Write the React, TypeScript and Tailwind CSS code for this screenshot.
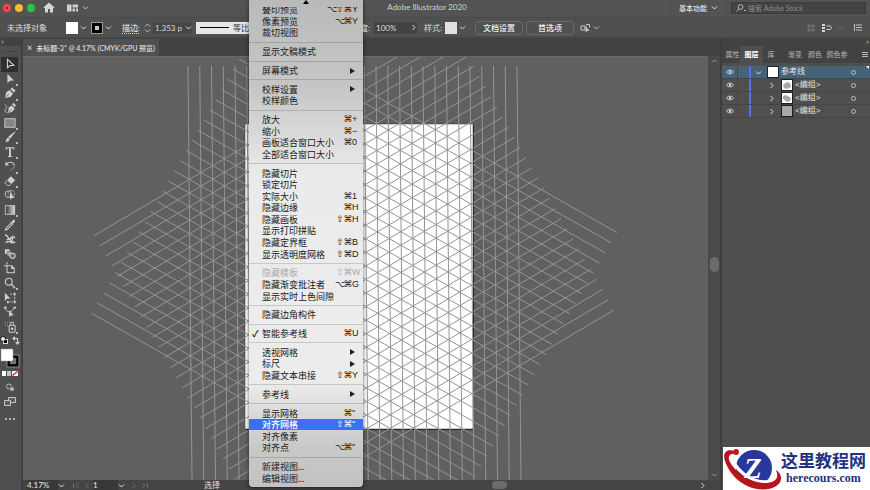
import { useState } from 'react'
import type { ReactNode } from 'react'

const menuItems: any[] = [
  { label: '叠印预览', mods: '⌥⇧⌘', k: 'Y' },
  { label: '像素预览', mods: '⌥⌘', k: 'Y' },
  { label: '裁切视图' },
  null,
  { label: '显示文稿模式' },
  null,
  { label: '屏幕模式', sub: true },
  null,
  { label: '校样设置', sub: true },
  { label: '校样颜色' },
  null,
  { label: '放大', mods: '⌘', k: '+' },
  { label: '缩小', mods: '⌘', k: '−' },
  { label: '画板适合窗口大小', mods: '⌘', k: '0' },
  { label: '全部适合窗口大小' },
  null,
  { label: '隐藏切片' },
  { label: '锁定切片' },
  { label: '实际大小', mods: '⌘', k: '1' },
  { label: '隐藏边缘', mods: '⌘', k: 'H' },
  { label: '隐藏画板', mods: '⇧⌘', k: 'H' },
  { label: '显示打印拼贴' },
  { label: '隐藏定界框', mods: '⇧⌘', k: 'B' },
  { label: '显示透明度网格', mods: '⇧⌘', k: 'D' },
  null,
  { label: '隐藏模板', mods: '⇧⌘', k: 'W', disabled: true },
  { label: '隐藏渐变批注者', mods: '⌥⌘', k: 'G' },
  { label: '显示实时上色间隙' },
  null,
  { label: '隐藏边角构件' },
  null,
  { label: '智能参考线', mods: '⌘', k: 'U', checked: true },
  null,
  { label: '透视网格', sub: true },
  { label: '标尺', sub: true },
  { label: '隐藏文本串接', mods: '⇧⌘', k: 'Y' },
  null,
  { label: '参考线', sub: true },
  null,
  { label: '显示网格', mods: '⌘', k: '"' },
  { label: '对齐网格', mods: '⇧⌘', k: '"' },
  { label: '对齐像素' },
  { label: '对齐点', mods: '⌥⌘', k: '"' },
  null,
  { label: '新建视图...' },
  { label: '编辑视图...' },
]

const line = { fill: 'none', stroke: 'currentColor', strokeWidth: 1 }

const tools: { name: string; more?: boolean; icon: ReactNode }[] = [
  { name: '选择工具', icon: <path d="M4 1.5v10l3-2.6 4.5-.4z" {...line} strokeWidth={1.3} /> },
  { name: '直接选择工具', more: true, icon: <path d="M4 1v11l3-3 4.5-.2z" fill="currentColor" /> },
  { name: '钢笔工具', more: true, icon: <><path d="M1 13l1.600-7L6.500 3.500l4 4L8 11.500z" fill="currentColor" /><path d="M7.500 2.500L9.500.5l4 4-2 2z" fill="currentColor" /><path d="M1.500 12.500l4-4" stroke="#4f4f4f" strokeWidth=".8" /></> },
  { name: '曲率工具', icon: <><path d="M4.500 13l1-6.500L9 4l3.500 3.500-2.500 3.500z" fill="currentColor" /><path d="M9.500 3l1.700-2L14 4.100l-1.700 1.700z" fill="currentColor" /><path d="M5 12.500l3.500-4" stroke="#4f4f4f" strokeWidth=".8" /><path d="M1 3c2.500 1.500 2.500 3 1 5s-1 4 2 4.500" {...line} /></> },
  { name: '矩形工具', more: true, icon: <rect x="1" y="2" width="12" height="10" fill="#858585" stroke="currentColor" /> },
  { name: '画笔工具', more: true, icon: <><path d="M13 1L7 8.500 5.300 7z" fill="currentColor" stroke="currentColor" /><path d="M1 12.500c2-.5 1-2.500 2.300-3.800 1-.9 2.600-.4 3 .6.500 2-2 4-5.300 3.200z" fill="currentColor" /></> },
  { name: '文字工具', more: true, icon: <path d="M2 1.500h10v3h-1c0-1.400-.5-1.800-2.900-1.800v8.100c0 .9.400 1.100 1.600 1.200v.7H4.300V12c1.200-.1 1.600-.3 1.600-1.200V2.700C3.500 2.700 3 3.100 3 4.500H2z" fill="currentColor" /> },
  { name: '旋转工具', more: true, icon: <><path d="M3 4.500c2.500-3 8-2.500 9 1.500" {...line} strokeWidth={1.300} /><path d="M12 6c.6 3-2 6-5 5.500" {...line} strokeDasharray="1 1" /><path d="M1.500 2v4.500H6z" fill="currentColor" /></> },
  { name: '橡皮擦工具', more: true, icon: <><path d="M8 1.500l5 4.500-4.500 4.500-5-4.500z" fill="currentColor" /><path d="M3.500 6.500L1 9l3 3.300h2.500L8.300 10.700" {...line} /></> },
  { name: '形状生成器工具', icon: <><circle cx="5" cy="6" r="3.800" {...line} /><circle cx="8.500" cy="5.500" r="3.800" {...line} strokeDasharray="1.500 1" /><path d="M7 4.500v8l2.300-2 3.200-.2z" fill="currentColor" /></> },
  { name: '渐变工具', more: true, icon: <rect x="1.500" y="2" width="11" height="10" fill="url(#toolFade)" stroke="currentColor" /> },
  { name: '吸管工具', icon: <><path d="M8.500 3.500l2-2.300c1.500-1 3 .5 2.200 2l-2.200 2.200z" fill="currentColor" /><path d="M7.500 3.500l3 3M8 5l-5.500 5.500L1.500 13 4 12l5.500-5.500" {...line} strokeWidth={1.200} /></> },
  { name: '宽度工具', icon: <><path d="M1 2.500c3-1 3 3 5 4s3-3 5-3M2 11.500c3-4 7 1 11-1" {...line} strokeWidth={1.800} /><path d="M3 8l4-1 2 4 1-5 3-1.500" {...line} strokeWidth={1.500} /></> },
  { name: '混合工具', icon: <><rect x="1" y="1.500" width="5.500" height="5.500" fill="currentColor" /><rect x="3.500" y="4" width="5.500" height="5.500" rx="1.500" fill="#a5a5a5" stroke="#4f4f4f" strokeWidth=".6" /><circle cx="10" cy="9" r="3" fill="#6a6a6a" stroke="currentColor" strokeWidth={1.200} /></> },
  { name: '画板工具', icon: <path d="M3.500 0v3M0 4.500h3M3.500 4.500H9l3 3v5h-8.500zM9 4.500v3h3" {...line} strokeWidth={1.200} /> },
  { name: '缩放工具', more: true, icon: <><circle cx="5.500" cy="5.500" r="4" {...line} strokeWidth={1.300} /><path d="M8.500 8.500l4.500 4.500" {...line} strokeWidth={1.700} /></> },
  { name: '自由变换工具', icon: <><path d="M1 1v9.500l2.500-2.500 4-.3z" fill="currentColor" /><path d="M7 2.500h5.500v9H4" {...line} strokeDasharray="2 1" /><path d="M11.500 1h2v2.500h-2zM11.500 10.500h2V13h-2zM3.500 10.500h2V13h-2z" fill="currentColor" /></> },
  { name: '操控变形工具', icon: <><path d="M1.500 2c1 4 3 5 5 4.500 3 0 4-2 5.500-4.500" {...line} /><path d="M0 1h3v2H0zM11 1h3v2h-3z" fill="currentColor" /><path d="M6 5v8l2-2 3.500-.3z" fill="currentColor" /></> },
  { name: '符号喷枪工具', more: true, icon: <><rect x="6" y="5" width="7" height="8" rx="1" {...line} strokeWidth={1.200} /><path d="M8 4.500v-3h3v3M1 1.500h1M3.500 2.500h1M6 1.500h1M1 4.500h1M3.500 5.500h1" {...line} /><circle cx="9.500" cy="9" r="1.500" fill="currentColor" /></> },
]

// three sets of 29 parallel guides, 60 degrees apart
const guideLines = Array.from({ length: 29 }, (_, i) => [
  [188 + i * 11.75, 66, 192 + i * 11.75, 481],
  [94 + i * 5.86, 235.7 + i * 10.15, 450 + i * 5.86, 25.7 + i * 10.15],
  [91.700 + i * 5.9, 313.300 - i * 10.17, 451.700 + i * 5.9, 517.300 - i * 10.17],
]).flat()

function Chevron({ dir = 'down', className = '' }: { dir?: string; className?: string }) {
  const d = dir === 'down' ? 'M1 2.500l2.500 2.500L6 2.500' : dir === 'up' ? 'M1 4.500L3.500 2 6 4.500' : dir === 'left' ? 'M4.500 1L2 3.500 4.500 6' : 'M2.500 1L5 3.500 2.500 6'
  return (
    <svg viewBox="0 0 7 7" className={`w-[7px] h-[7px] shrink-0 ${className}`}>
      <path d={d} fill="none" stroke="currentColor" strokeWidth="1" />
    </svg>
  )
}

function TitleBar() {
  return (
    <header className="grid grid-cols-[1fr_auto_1fr] items-center h-[18px] shrink-0 bg-[#535353] border-b border-[#484848] pr-1">
      <div className="flex items-center h-full pl-[3px] pb-[2px]">
        <div className="flex gap-1">
          <button aria-label="关闭" className="w-2 h-2 rounded-full bg-[#f4494b] flex items-center justify-center"><span className="w-[2px] h-[2px] rounded-full bg-[#7d0d0d]" /></button>
          <button aria-label="最小化" className="w-2 h-2 rounded-full bg-[#f8bd2f]" />
          <button aria-label="全屏" className="w-2 h-2 rounded-full bg-[#27c840]" />
        </div>
        <button aria-label="主页" className="ml-2">
          <svg viewBox="0 0 12 11" className="w-3 h-[11px]" fill="#d6d6d6"><path d="M6 .5L.5 5.500l1 .8.5-.4V10.500h3V7h2v3.500h3V5.900l.5.4 1-.8z" /></svg>
        </button>
        <button aria-label="排列文档" className="flex items-center gap-1 ml-3 text-[#d0d0d0]">
          <svg viewBox="0 0 11 8" className="w-[11px] h-2" fill="currentColor"><path d="M0 .5h4.500v7H0zM5.500.5H11v3H5.500zM5.500 4.500H8v3H5.500zM9 4.500h2v3H9z" /></svg>
          <Chevron />
        </button>
      </div>
      <h1 className="text-[8px] leading-3 text-[#d2d2d2] pr-3 -mt-1">Adobe Illustrator 2020</h1>
      <div className="flex items-center justify-end h-full pb-[2px]">
        <div className="flex items-center gap-1 h-3 pl-2 pr-2 border-l border-r border-[#4a4a4a] text-[#e2e2e2]">
          <select aria-label="工作区" className="appearance-none bg-transparent text-[7px] leading-3 font-medium w-7">
            <option>基本功能</option>
          </select>
          <Chevron />
        </div>
        <label className="flex items-center gap-[2px] h-3 ml-1 pl-1 w-[135px] bg-[#434343] border border-[#3c3c3c]">
          <svg viewBox="0 0 10 8" className="w-[10px] h-2 text-[#b5b5b5]"><circle cx="4.500" cy="3" r="2.400" {...line} /><path d="M3 5L.5 7.500M8 6.500h2" {...line} /></svg>
          <input placeholder="搜索 Adobe Stock" aria-label="搜索 Adobe Stock" className="bg-transparent min-w-0 flex-1 text-[7px] leading-3 outline-none placeholder:text-[#8b8b8b]" />
        </label>
      </div>
    </header>
  )
}

function ControlBar() {
  return (
    <div className="flex items-center h-5 shrink-0 bg-[#505050] border-b border-[#454545] pl-[7px] pr-2 text-[8px] leading-3 text-[#dcdcdc]">
      <span className="w-[59px] shrink-0">未选择对象</span>
      <button aria-label="填色" className="flex items-center gap-[2px]"><span className="w-3 h-3 bg-white" /><Chevron /></button>
      <button aria-label="描边颜色" className="flex items-center gap-[2px] ml-1">
        <span className="w-3 h-3 bg-black border border-[#999] flex items-center justify-center"><span className="w-1 h-1 bg-[#c8c8c8]" /></span>
        <Chevron />
      </button>
      <label htmlFor="stroke" className="ml-[10px] shrink-0 font-medium underline underline-offset-2 decoration-dotted">描边:</label>
      <span className="flex flex-col -space-y-[2px] ml-1 text-[#c0c0c0]"><Chevron dir="up" /><Chevron /></span>
      <span className="flex items-center h-3 ml-[2px] bg-[#464646]">
        <input id="stroke" defaultValue="1.353 p" className="w-8 pl-[2px] text-[8px] leading-3 bg-transparent outline-none" />
        <Chevron />
      </span>
      <button aria-label="画笔定义" className="flex items-center gap-1 shrink-0 h-3 w-[90px] ml-1 pl-1 bg-[#e6e6e6] text-[#333]">
        <span className="w-[29px] h-px bg-black" />等比
      </button>
      <label htmlFor="opacity" className="shrink-0 w-[84px] text-right font-medium">度:</label>
      <span className="flex items-center shrink-0 h-3 ml-1 bg-[#434343]">
        <input id="opacity" aria-label="不透明度" defaultValue="100%" className="w-9 pl-[2px] text-[8px] leading-3 bg-transparent outline-none" />
        <Chevron dir="right" />
      </span>
      <span className="ml-[7px] shrink-0">样式:</span>
      <button aria-label="图形样式" className="flex items-center gap-[2px] ml-[3px]"><span className="w-3 h-3 bg-[#e2e2e2]" /><Chevron /></button>
      <button className="shrink-0 h-[14px] w-12 ml-[9px] border border-[#696969] rounded-sm font-medium text-[#eee]">文档设置</button>
      <button className="shrink-0 h-[14px] w-12 ml-[3px] border border-[#696969] rounded-sm font-medium text-[#eee]">首选项</button>
      <button aria-label="选择类似对象" className="flex items-center gap-[2px] ml-[6px] text-[#c4c4c4]">
        <svg viewBox="0 0 11 10" className="w-[11px] h-[10px]"><path d="M1 3h4v4H1zM5 4h2M6 1.500h3.500v3" {...line} /><path d="M5.500 3.500v6l1.600-1.600 2.500-.1z" fill="currentColor" /></svg>
        <Chevron />
      </button>
      <div className="flex items-center ml-auto">
        <svg viewBox="0 0 8 8" className="w-2 h-2 text-[#777]"><path d="M1 1h2v2H1zM5 1h2v2H5zM1 5h2v2H1zM5 5h2v2H5z" {...line} /></svg>
        <button aria-label="对齐" className="flex items-center ml-[7px] text-[#d6d6d6]">
          <svg viewBox="0 0 11 8" className="w-[11px] h-2"><path d="M0 0h3v2H0zM0 3h3v2H0zM0 6h3v2H0z" fill="currentColor" /><path d="M4.500 2h3.300c2 0 2 3.500 0 3.500H4.500" {...line} /></svg>
        </button>
        <Chevron className="ml-1 text-[#6c6c6c]" />
        <button aria-label="控制面板菜单" className="ml-[10px] text-[#c0c0c0]">
          <svg viewBox="0 0 8 7" className="w-2 h-[7px] block"><path d="M.5 0v7M2 1h6M2 3.500h6M2 6h6" {...line} /></svg>
        </button>
      </div>
    </div>
  )
}

function Toolbar() {
  const [active, setActive] = useState('选择工具')
  return (
    <aside className="flex flex-col w-[23px] shrink-0 bg-[#4f4f4f] border-r-2 border-[#404040]">
      <div className="h-2 bg-[#424242] text-[#aaa] text-[7px] leading-[7px] pl-[1px]">»</div>
      <div className="h-[11px] flex justify-center items-center"><span className="w-4 h-px bg-[#424242]" /></div>
      <div className="flex flex-col h-[277px] px-[1px]">
        {tools.map(t => (
          <button key={t.name} aria-label={t.name} onClick={() => setActive(t.name)}
            className={`relative flex-1 min-h-0 w-[17px] flex items-center justify-center text-[#cfcfcf] ${active === t.name ? 'bg-[#2f2f2f]' : ''}`}>
            <svg viewBox="0 0 14 14" className="w-3 h-3">
              <defs><linearGradient id="toolFade"><stop stopColor="#333" /><stop offset="1" stopColor="#ddd" /></linearGradient></defs>
              {t.icon}
            </svg>
            {t.more && <span className="absolute right-0 bottom-0 w-[2px] h-[2px] bg-[#bbb]" />}
          </button>
        ))}
      </div>
      <svg viewBox="0 0 21 48" className="w-[21px] h-12 shrink-0">
        <rect x="3.500" y="5.500" width="4" height="4" fill="#000" stroke="#ddd" /><rect x="1" y="3" width="4" height="4" fill="#fff" stroke="#000" strokeWidth=".6" />
        <path d="M14 4.500h3.500V9" fill="none" stroke="#ccc" strokeWidth="1.200" /><path d="M15 2v5l-3-2.500zM15 8h5l-2.500 3z" fill="#ccc" />
        <rect x="8.500" y="22.500" width="9" height="9" fill="none" stroke="#000" strokeWidth="2.500" /><rect x="7" y="21" width="12" height="12" fill="none" stroke="#aaa" strokeWidth=".7" /><rect x="11" y="25" width="4" height="4" fill="none" stroke="#bbb" strokeWidth=".7" />
        <rect x="1" y="15" width="12" height="12" fill="#fff" stroke="#999" strokeWidth=".5" />
        <path d="M2 37h4v5H2z" fill="#fff" /><path d="M7 37h4v5H7z" fill="#b5c7c8" /><path d="M12 37h6v5h-6z" fill="#fff" /><path d="M12.500 41.500l5-4" stroke="#d5222a" strokeWidth="1.500" />
      </svg>
      <button aria-label="绘图模式" className="mt-[1px] ml-1">
        <svg viewBox="0 0 12 9" className="w-3 h-[9px]"><circle cx="5" cy="3.500" r="2.500" fill="none" stroke="#bbb" /><path d="M6 4h4v4H6z" fill="#bbb" stroke="#555" strokeWidth=".6" /></svg>
      </button>
      <button aria-label="更改屏幕模式" className="mt-[5px] ml-1">
        <svg viewBox="0 0 12 9" className="w-3 h-[9px]"><path d="M.5 3.500h6v5h-6zM4.500 3V.5h7v5H7" fill="#5e5e5e" stroke="#c4c4c4" /></svg>
      </button>
      <button aria-label="编辑工具栏" className="flex gap-[2px] mt-3 ml-[5px]">
        {[0, 1, 2].map(i => <span key={i} className="w-[2px] h-[2px] rounded-full bg-[#cfcfcf]" />)}
      </button>
    </aside>
  )
}

function Document() {
  return (
    <main className="flex flex-col flex-1 min-w-0">
      <div className="flex h-[18px] shrink-0 bg-[#424242]">
        <div className="flex items-center gap-1 pl-1 pr-1 mt-[1px] bg-[#505050] text-[#e4e4e4] text-[7px] leading-3 font-medium">
          <button aria-label="关闭文档" className="text-[9px] leading-3">×</button>
          <span className="whitespace-nowrap">未标题-3* @ 4.17% (CMYK/GPU 预览)</span>
        </div>
      </div>
      <div className="flex flex-1 min-h-0">
        <svg className="flex-1 min-w-0 h-full bg-[#606060] border-t border-[#6a6a6a]">
          <g transform="translate(-23 -57)">
            <path d="M246 125h228v305H246z" fill="#222" />
            <rect x="245" y="124" width="228" height="305" fill="#fff" stroke="#333" strokeWidth=".5" />
            {guideLines.map((l, i) => (
              <line key={i} x1={l[0]} y1={l[1]} x2={l[2]} y2={l[3]} stroke="#949494" strokeWidth="1" />
            ))}
          </g>
        </svg>
        <div className="flex flex-col items-center justify-between w-3 py-[2px] bg-[#4a4a4a] text-[#999]">
          <Chevron dir="up" />
          <span className="w-[9px] h-[15px] rounded-full bg-[#6b6b6b] -mt-2" />
          <Chevron />
        </div>
      </div>
      <footer className="flex items-center h-[10px] shrink-0 bg-[#444] pl-1 text-[8px] leading-[10px] text-[#e0e0e0]">
        <input aria-label="缩放" defaultValue="4.17%" className="w-[31px] h-[10px] bg-[#383838] outline-none font-medium" />
        <Chevron />
        <span className="flex items-center gap-[3px] w-7 pl-2 text-[#717171]">
          <span className="flex items-center"><span className="w-px h-[5px] bg-[#717171]" /><Chevron dir="left" /></span>
          <Chevron dir="left" />
        </span>
        <input aria-label="画板导航" defaultValue="1" className="w-[25px] h-[10px] bg-[#383838] outline-none font-medium" />
        <Chevron />
        <span className="flex items-center gap-[3px] ml-[5px] text-[#717171]">
          <Chevron dir="right" />
          <span className="flex items-center"><Chevron dir="right" /><span className="w-px h-[5px] bg-[#717171]" /></span>
        </span>
        <span className="ml-14">选择</span>
        <div className="flex-1 flex items-center justify-end h-full">
          <span className="w-[15px] h-2 rounded-full bg-[#6b6b6b] mr-[192px]" />
          <Chevron dir="right" className="mr-[14px]" />
        </div>
      </footer>
    </main>
  )
}

const layers = [
  { name: '参考线', child: false, art: '' },
  { name: '<编组>', child: true, art: 'M1 5l4-3 3 1 1 4-4 2-3-1z' },
  { name: '<编组>', child: true, art: 'M1 3l3-1 5 3-1 3-3 1-4-3z' },
  { name: '<编组>', child: true, art: 'M0 0h10v10H0z' },
]

function LayersPanel() {
  return (
    <aside className="flex flex-col w-[150px] shrink-0 bg-[#4f4f4f] border-l-2 border-[#3e3e3e]">
      <div className="h-2 bg-[#424242] text-[#bbb] text-[7px] leading-[7px] text-right pr-[1px]">»</div>
      <div className="flex items-stretch h-[17px] bg-[#424242] text-[7px] leading-[17px] text-[#b9b9b9] pl-[3px]">
        <button className="w-[15px] whitespace-nowrap">属性</button>
        <button className="w-[23px] bg-[#4f4f4f] text-white font-bold">图层</button>
        <button className="w-4">库</button>
        <button className="w-4 ml-2">渐变</button>
        <button className="w-4 ml-1">颜色</button>
        <button className="w-[22px] ml-[3px] whitespace-nowrap">颜色参</button>
        <button aria-label="面板菜单" className="ml-auto mr-[2px]">
          <svg viewBox="0 0 6 6" className="w-[6px] h-[6px]"><path d="M0 .5h6M0 2.500h6M0 4.500h6" stroke="#bbb" strokeWidth="1" /></svg>
        </button>
      </div>
      <ul className="mt-[3px]">
        {layers.map((l, i) => (
          <li key={i} className={`relative flex items-center h-[13px] border-b border-[#454545] text-[8px] leading-3 text-[#e6e6e6] font-['Liberation_Sans','Noto_Sans_CJK_SC',sans-serif] ${l.child ? '' : 'bg-[#446378]'}`}>
            <button aria-label="切换可视性" className="w-[15px] flex justify-center">
              <svg viewBox="0 0 8 6" className="w-2 h-[6px]"><path d="M.5 3C2 .5 6 .5 7.500 3 6 5.500 2 5.500.5 3z" fill="none" stroke="#d4d4d4" strokeWidth=".9" /><circle cx="4" cy="3" r="1.200" fill="#d4d4d4" /></svg>
            </button>
            <span className="w-3 h-full border-l border-[#454545]" />
            <span className="w-[2px] h-full bg-[#5b6fe6]" />
            <Chevron dir={l.child ? 'right' : 'down'} className={l.child ? 'ml-[17px]' : 'ml-1'} />
            <svg viewBox="0 0 10 10" className={`w-[10px] h-[10px] bg-white outline outline-black/60 ${l.child ? 'ml-[7px]' : 'ml-[6px]'}`}><path d={l.art} fill="#a8a8a8" /></svg>
            <span className="ml-[3px]">{l.name}</span>
            <span className="ml-auto w-[5px] h-[5px] mr-[14px] rounded-full border border-[#b9c0c4]" />
            {!l.child && <svg viewBox="0 0 3 3" className="absolute top-0 right-px w-[3px] h-[3px]"><path d="M0 0h3v3z" fill="#fff" /></svg>}
          </li>
        ))}
      </ul>
    </aside>
  )
}

function ViewMenu() {
  return (
    <div role="menu" className="absolute left-[249px] top-0 w-[114px] h-[487px] flex flex-col pt-1 pb-[3px] rounded-b-[4px] overflow-hidden shadow-[0_1px_4px_rgba(0,0,0,0.6)] bg-[linear-gradient(#bababa,#c6c6c6_18%,#ebebeb_36%,#ececec_78%,#c8c8c8_92%,#c2c2c2)] text-[9px] leading-[11px] text-[#202020]">
      {menuItems.map((m, i) => m === null ? (
        <div key={i} role="separator" className="flex-5 min-h-0 flex items-center"><span className="w-full h-px bg-black/15" /></div>
      ) : (
        <button key={i} role="menuitem" disabled={m.disabled}
          className={`flex-8 min-h-0 w-full flex items-center pr-[2px] text-left whitespace-nowrap ${m.label === '对齐网格' ? 'bg-[#3a70f2] text-white font-medium' : ''} ${m.disabled ? 'text-[#ababab]' : ''}`}>
          <span className="w-[13px] pl-[3px] text-[9px] font-bold">{m.checked ? '✓' : ''}</span>
          <span>{m.label}</span>
          {m.k && (
            <span className="ml-auto flex items-center font-['Liberation_Sans','DejaVu_Sans',sans-serif]">
              {m.mods.split('').map((c: string) => <span key={c} className="text-[9px] w-2 flex justify-center">{c}</span>)}
              <span className="w-[9px]">{m.k}</span>
            </span>
          )}
          {m.sub && <svg viewBox="0 0 5 6" className="w-[5px] h-[6px] ml-auto mr-[6px]"><path d="M0 0l5 3-5 3z" fill="currentColor" /></svg>}
        </button>
      ))}
      <div className="absolute inset-x-0 top-0 h-[7px] bg-[#bababa] flex justify-center">
        <svg viewBox="0 0 6 4" className="w-[6px] h-1"><path d="M3 0l3 4H0z" /></svg>
      </div>
    </div>
  )
}

function SiteBadge() {
  return (
    <div className="absolute right-0 bottom-0 w-[147px] h-[43px] bg-white flex items-center">
      <svg viewBox="0 0 58 43" className="w-[58px] h-[43px] shrink-0">
        <circle cx="31" cy="21" r="18" fill="#27379b" />
        <path d="M8 8c3 14 19 27 34 27 10 0 13-5 10-12" fill="none" stroke="#fff" strokeWidth="3.500" />
        <path d="M13 5C4 0-1 6 2 14c4 12 15 25 32 28 15 2 25-4 24-12-1-4-3-6-5-7 3 7 1 12-9 13C29 37 11 25 6 13 5 9 7 6 13 7z" fill="#b5151c" />
        <circle cx="13" cy="5" r="3" fill="#c3161f" />
        <text x="21" y="31" fontFamily="Liberation Serif, serif" fontSize="29" fontWeight="bold" fontStyle="italic" fill="#fff">Z</text>
      </svg>
      <div className="flex flex-col items-center text-[#21317f] -mt-px">
        <span className="text-[17px] leading-[19px] font-bold whitespace-nowrap">这里教程网</span>
        <span className="text-[12px] leading-4 font-bold font-['Liberation_Serif',serif]">herecours.com</span>
      </div>
    </div>
  )
}

export default function App() {
  return (
    <div className="relative flex flex-col h-screen overflow-hidden bg-[#424242] font-['Lato','Noto_Sans_CJK_SC',sans-serif]">
      <TitleBar />
      <ControlBar />
      <div className="flex flex-1 min-h-0">
        <Toolbar />
        <Document />
        <LayersPanel />
      </div>
      <ViewMenu />
      <SiteBadge />
    </div>
  )
}
